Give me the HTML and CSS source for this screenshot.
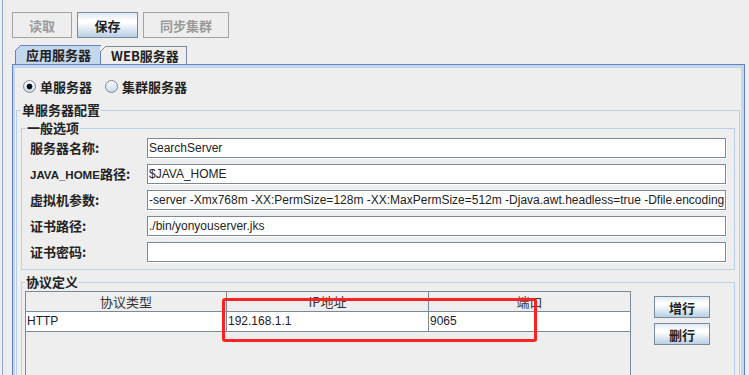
FILE: index.html
```html
<!DOCTYPE html>
<html lang="zh-CN">
<head>
    <meta charset="UTF-8">
    <title>服务器配置</title>
    <link rel="stylesheet" href="styles.css">
</head>
<body>
    <div class="app">
        <div class="toolbar">
            <button class="btn btn-read" disabled>读取</button>
            <button class="btn btn-save">保存</button>
            <button class="btn btn-sync" disabled>同步集群</button>
        </div>

        <div class="tabs">
            <div class="tab active">应用服务器</div>
            <div class="tab">WEB服务器</div>
        </div>

        <div class="panel">
            <div class="radios">
                <label class="radio"><input type="radio" name="mode" checked><span>单服务器</span></label>
                <label class="radio"><input type="radio" name="mode"><span>集群服务器</span></label>
            </div>

            <fieldset class="group">
                <legend>单服务器配置</legend>

                <fieldset class="sub general">
                    <legend>一般选项</legend>
                    <div class="form">
                        <label>服务器名称:</label>
                        <input type="text" value="SearchServer">
                        <label><span class="latin">JAVA_HOME</span>路径:</label>
                        <input type="text" value="$JAVA_HOME">
                        <label>虚拟机参数:</label>
                        <input type="text" value="-server -Xmx768m -XX:PermSize=128m -XX:MaxPermSize=512m -Djava.awt.headless=true -Dfile.encoding=UTF-8">
                        <label>证书路径:</label>
                        <input type="text" value="./bin/yonyouserver.jks">
                        <label>证书密码:</label>
                        <input type="password" value="">
                    </div>
                </fieldset>

                <fieldset class="sub proto">
                    <legend>协议定义</legend>
                    <div class="proto-body">
                        <div class="grid-wrap">
                            <div class="thead">
                                <div class="th">协议类型</div>
                                <div class="th">IP地址</div>
                                <div class="th">端口</div>
                            </div>
                            <div class="trow">
                                <div class="td">HTTP</div>
                                <div class="td">192.168.1.1</div>
                                <div class="td">9065</div>
                            </div>
                            <div class="mark"></div>
                        </div>
                        <div class="row-actions">
                            <button class="btn small">增行</button>
                            <button class="btn small">删行</button>
                        </div>
                    </div>
                </fieldset>
            </fieldset>
        </div>
    </div>
</body>
</html>
```

FILE: styles.css
```css
body {
    margin: 0;
    background: #eeeeee;
    font-family: "Liberation Sans", "Noto Sans CJK SC", sans-serif;
    color: #222;
    overflow: hidden;
}
.app {
    margin-left: 2px;
    border-left: 1px solid #8ea8cf;
    padding: 12px 4px 0 9px;
    height: 375px;
    box-sizing: border-box;
    overflow: hidden;
}
.toolbar {
    display: flex;
    gap: 5px;
}
.btn {
    height: 26px;
    padding: 0;
    font-family: "Noto Sans CJK SC", sans-serif;
    font-size: 13px;
    font-weight: bold;
    color: #222;
    border: 1px solid #7a8a99;
    background: linear-gradient(#dde8f3 0%, #ffffff 30%, #ffffff 40%, #b8cfe5 100%);
}
.btn:disabled {
    color: #999;
    border-color: #a3a3a3;
    background: #eeeeee;
}
.btn-read { width: 60px; }
.btn-save { width: 61px; }
.btn-sync { width: 86px; }

.tabs {
    display: flex;
    align-items: flex-end;
    margin: 7px 0 0 3px;
}
.tab {
    position: relative;
    width: 86px;
    height: 18px;
    box-sizing: border-box;
    padding-left: 10px;
    border: 1px solid #7a8a99;
    border-bottom: none;
    font-family: "Noto Sans CJK SC", sans-serif;
    font-size: 13px;
    font-weight: bold;
    line-height: 17px;
    color: #222;
}
.tab + .tab {
    border-left: none;
}
.tab::before {
    content: "";
    position: absolute;
    left: -1px;
    top: -1px;
    width: 6px;
    height: 6px;
    background: linear-gradient(135deg, #eeeeee 0 42%, #7a8a99 42% 58%, transparent 58%);
}
.tab.active {
    height: 19px;
    background: #c4d7ed;
    border-color: #6382bf;
    line-height: 18px;
}
.tab.active::before {
    background: linear-gradient(135deg, #eeeeee 0 42%, #6382bf 42% 58%, transparent 58%);
}

.panel {
    border: 1px solid #6382bf;
    box-shadow: inset 0 3px 0 #c4d7ed, inset 2px 0 0 #c4d7ed, inset -3px 0 0 #c4d7ed;
    padding: 13px 4px 0 3px;
    height: 400px;
}
.radios {
    display: flex;
    align-items: center;
    height: 16px;
    padding-left: 7px;
}
.radio {
    display: flex;
    align-items: center;
    gap: 4px;
    margin-right: 13px;
    font-family: "Noto Sans CJK SC", sans-serif;
    font-size: 13px;
    font-weight: bold;
}
.radio input {
    appearance: none;
    margin: 0;
    width: 13px;
    height: 13px;
    border: 1px solid #7a8a99;
    border-radius: 50%;
    background: linear-gradient(#ffffff, #c6d8ec);
}
.radio input:checked {
    background: radial-gradient(circle, #111 0 2.6px, transparent 3.2px), linear-gradient(#ffffff, #c6d8ec);
}

fieldset {
    margin: 0;
    min-width: 0;
    border: 1px solid #b8cfe5;
}
legend {
    padding: 0 1px;
    font-family: "Noto Sans CJK SC", sans-serif;
    font-size: 13px;
    font-weight: bold;
    line-height: 14px;
    color: #222;
}
.group {
    margin-top: 9px;
    padding: 4px 4px 0 4px;
    height: 400px;
}
.general {
    padding: 3px 8px 7px 8px;
}
.general legend {
    margin-left: -4px;
}
.form {
    display: grid;
    grid-template-columns: 117px 1fr;
    grid-auto-rows: 20px;
    row-gap: 6px;
}
.form label {
    display: block;
    font-family: "Noto Sans CJK SC", sans-serif;
    font-size: 13px;
    font-weight: bold;
    line-height: 20px;
    white-space: nowrap;
}
.form .latin {
    font-family: "Liberation Sans", sans-serif;
    font-size: 11.5px;
}
.form input {
    height: 20px;
    box-sizing: border-box;
    margin: 0;
    padding: 0 1px;
    border: 1px solid #7a8a99;
    box-shadow: 1px 1px 0 #ffffff;
    background: #ffffff;
    font-family: "Liberation Sans", sans-serif;
    font-size: 12px;
    color: #222;
    outline: none;
}

.proto {
    margin-top: 5px;
    padding: 2px 3px 0 3px;
    height: 200px;
}
.proto-body {
    display: flex;
    align-items: flex-start;
}
.grid-wrap {
    position: relative;
    width: 606px;
    height: 110px;
    box-sizing: border-box;
    border: 1px solid #7a8a99;
    border-bottom: none;
    background: #eeeeee;
}
.thead,
.trow {
    display: grid;
    grid-template-columns: 201px 202px 201px;
}
.th,
.td {
    height: 20px;
    box-sizing: border-box;
    border-right: 1px solid #7a8a99;
    border-bottom: 1px solid #7a8a99;
}
.th:last-child,
.td:last-child {
    border-right: none;
}
.th {
    text-align: center;
    font-family: "Noto Sans CJK SC", sans-serif;
    font-size: 13px;
    line-height: 20px;
    color: #333;
}
.td {
    padding-left: 1px;
    background: #ffffff;
    font-size: 12px;
    line-height: 19px;
    color: #1c1c2c;
}
.mark {
    position: absolute;
    left: 196px;
    top: 6px;
    width: 315px;
    height: 44px;
    box-sizing: border-box;
    border: 3px solid #ff2222;
    border-radius: 3px;
}
.row-actions {
    display: flex;
    flex-direction: column;
    gap: 5px;
    margin: 5px 0 0 23px;
}
.btn.small {
    width: 56px;
    height: 22px;
}
```
